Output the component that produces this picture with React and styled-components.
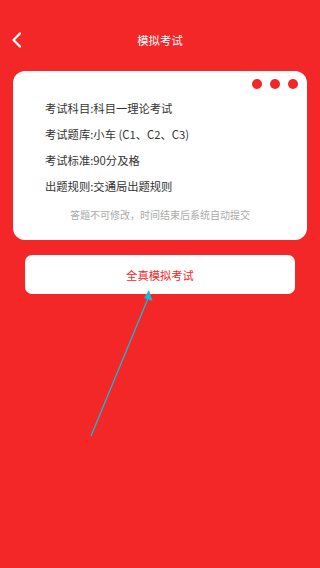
import React from 'react'
import styled, { createGlobalStyle } from 'styled-components'

const GlobalStyle = createGlobalStyle`
  html, body {
    margin: 0;
    padding: 0;
    background: #f32628;
  }
  body {
    font-family: "Noto Sans CJK SC", "Noto Sans", sans-serif;
  }
`

const info = [
  '考试科目:科目一理论考试',
  '考试题库:小车 (C1、C2、C3)',
  '考试标准:90分及格',
  '出题规则:交通局出题规则',
]

export default function App() {
  return (
    <>
      <GlobalStyle />
      <Page>
        <Header>
          <Back>
            <svg width="12" height="16" viewBox="0 0 12 16">
              <path d="M9 1.5 L2.5 8 L9 14.5" fill="none" stroke="#fff" strokeWidth="2.2" strokeLinecap="round" strokeLinejoin="round" />
            </svg>
          </Back>
          <Title>模拟考试</Title>
        </Header>
        <Card>
          <Dots>
            <Dot />
            <Dot />
            <Dot />
          </Dots>
          <InfoList>
            {info.map((t) => (
              <InfoRow key={t}>{t}</InfoRow>
            ))}
          </InfoList>
          <Note>答题不可修改，时间结束后系统自动提交</Note>
        </Card>
        <StartButton>全真模拟考试</StartButton>
        <Arrow width="70" height="150" viewBox="0 0 70 150">
          <line x1="4" y1="148" x2="62" y2="8" stroke="#1bb8d6" strokeWidth="1.3" />
          <polygon points="62,2 65.5,13 57,10" fill="#1bb8d6" />
        </Arrow>
      </Page>
    </>
  )
}

const Page = styled.div`
  position: relative;
  width: 320px;
  height: 568px;
  background: #f32628;
  overflow: hidden;
`

const Header = styled.div`
  position: relative;
  display: flex;
  align-items: center;
  justify-content: center;
  height: 40px;
  padding-top: 20px;
`

const Back = styled.div`
  position: absolute;
  left: 11px;
  top: 32px;
  display: flex;
`

const Title = styled.div`
  color: #fff;
  font-size: 11.3px;
  letter-spacing: 0.1px;
`

const Card = styled.div`
  margin: 11px 13px 0;
  height: 169px;
  box-sizing: border-box;
  background: #fff;
  border-radius: 12px;
  padding: 8px 9px 0 0;
  display: flex;
  flex-direction: column;
`

const Dots = styled.div`
  display: flex;
  justify-content: flex-end;
  gap: 8px;
`

const Dot = styled.span`
  width: 10px;
  height: 10px;
  border-radius: 50%;
  background: #f32628;
`

const InfoList = styled.div`
  display: flex;
  flex-direction: column;
  gap: 10px;
  margin: 11px 0 0 32px;
`

const InfoRow = styled.div`
  font-size: 11.3px;
  line-height: 16px;
  color: #333;
`

const Note = styled.div`
  margin: 13px -9px 0 0;
  text-align: center;
  font-size: 10px;
  color: #aaa;
`

const StartButton = styled.div`
  margin: 15px 25px 0;
  height: 39px;
  background: #fff;
  border-radius: 7px;
  display: flex;
  align-items: center;
  justify-content: center;
  color: #f32628;
  font-size: 11.3px;
`

const Arrow = styled.svg`
  position: absolute;
  left: 87px;
  top: 288px;
`
